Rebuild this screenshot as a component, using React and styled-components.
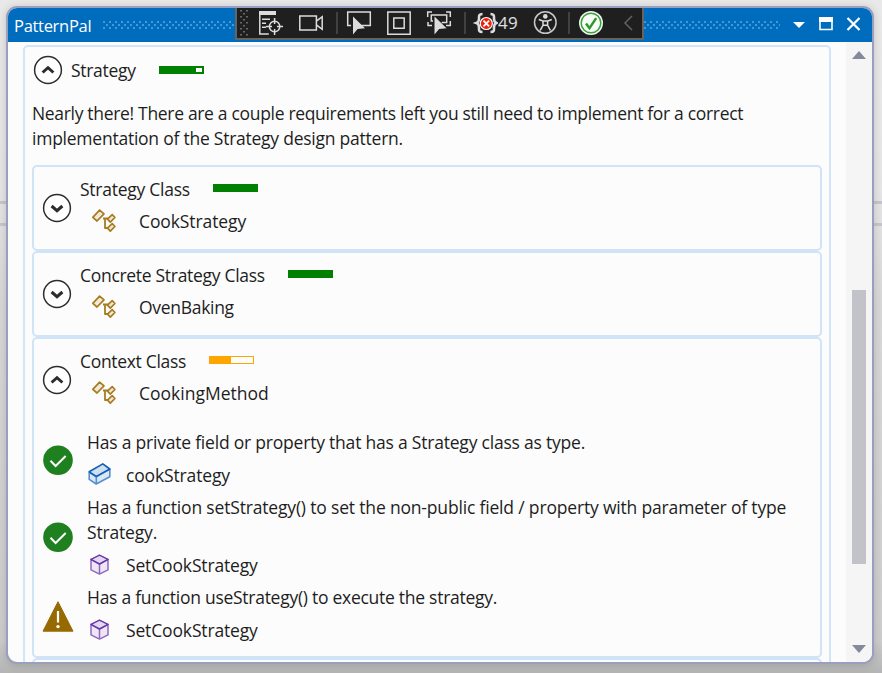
import React from "react";
import styled, { createGlobalStyle } from "styled-components";

const Global = createGlobalStyle`
  * { box-sizing: border-box; }
  body {
    margin: 0;
    overflow: hidden;
    font-family: "Open Sans", "Noto Sans", sans-serif;
    font-size: 17.5px;
    line-height: 25px;
    color: #1e1e1e;
  }
`;

const Desktop = styled.main`
  width: 882px;
  height: 673px;
  padding: 6px 8px 9px 6px;
  background:
    linear-gradient(#c6c6d2, #c6c6d2) 0 201px / 100% 3px no-repeat,
    linear-gradient(#c6c6d2, #c6c6d2) 0 223px / 100% 3px no-repeat,
    linear-gradient(#e9e9e9 0, #e6e6e6 190px, #d8d8d8 300px, #cdcdcd 640px, #b4b4b4 673px);
`;

const Window = styled.section`
  display: flex;
  flex-direction: column;
  width: 868px;
  height: 658px;
  border: 2px solid #9b9fbe;
  border-radius: 11px;
  overflow: hidden;
  background: #fcfcfc;
  box-shadow: 0 1px 8px rgba(0, 0, 0, 0.16);
`;

const TitleBar = styled.header`
  display: flex;
  flex: none;
  height: 34px;
  padding-left: 6px;
  background: #006cbe;
`;

const Title = styled.h1`
  flex: none;
  width: 89px;
  margin: 0;
  font-size: 16.5px;
  font-weight: 400;
  line-height: 35px;
  letter-spacing: ${(p) => p.$ls}px;
  color: #fff;
  white-space: nowrap;
`;

const Grip = styled.div`
  flex: none;
  width: ${(p) => p.$w}px;
  height: 8px;
  margin-top: 13px;
  background:
    conic-gradient(from 0deg at 2px 2px, transparent 75%, #4398d8 0) 0 0 / 6px 6px,
    conic-gradient(from 0deg at 2px 2px, transparent 75%, #4398d8 0) 3px 3px / 6px 6px;
`;

const DebugBar = styled.div`
  display: flex;
  flex: none;
  width: 409px;
  height: 34px;
  margin-top: -2px;
  border: 2px solid #666462;
  background: #1f1f1f;
`;

const WindowButtons = styled.svg`
  flex: none;
  width: 92px;
  height: 34px;
`;

const Body = styled.div`
  display: flex;
  flex: 1;
  min-height: 0;
`;

const Content = styled.div`
  flex: 1;
  min-width: 0;
  padding: 3px 15px 0 15px;
  overflow: hidden;
`;

const Pattern = styled.article`
  height: 700px;
  padding: 0 7px;
  border: 2px solid #d3e5f8;
  border-radius: 5px;
`;

const PatternHead = styled.div`
  display: flex;
  align-items: center;
  height: 45px;
  padding-left: 1px;
`;

const PatternName = styled.h2`
  flex: none;
  width: 96px;
  margin: 2px 0 0;
  padding-left: 8px;
  font-size: inherit;
  font-weight: 400;
  letter-spacing: -0.3px;
`;

const Description = styled.p`
  margin: 9px 0 14px;
`;

const Card = styled.section`
  height: ${(p) => p.$h}px;
  padding: 10px 0 0 8px;
  border: 2px solid #d0e3f7;
  border-radius: 5px;
`;

const CardHead = styled.div`
  display: flex;
  align-items: center;
  height: 62px;
`;

const CardTitles = styled.div`
  padding: 0 0 6px 8px;
`;

const Line = styled.div`
  display: flex;
  height: 25px;
  margin-bottom: ${(p) => p.$gap || 0}px;
`;

const Label = styled.span`
  flex: none;
  width: ${(p) => (p.$w ? `${p.$w}px` : "auto")};
  margin-left: ${(p) => p.$left || 0}px;
  letter-spacing: ${(p) => p.$ls || 0}px;
  white-space: nowrap;
`;

const Meter = styled.span`
  flex: none;
  width: 45px;
  height: 8px;
  margin-top: ${(p) => p.$top || 0}px;
  border: ${(p) => p.$edge || 2}px solid ${(p) => p.$color};
  background: linear-gradient(90deg, ${(p) => p.$color} ${(p) => p.$fill}%, #fcfcfc ${(p) => p.$fill}%) padding-box;
`;

const Requirements = styled.div`
  display: flex;
  flex-direction: column;
  gap: 7px;
  padding-top: 19px;
`;

const Requirement = styled.div`
  display: flex;
  align-items: center;
`;

const StatusSlot = styled.div`
  flex: none;
  width: 45px;
  height: 32px;
  margin-top: ${(p) => p.$top}px;
`;

const Member = styled.div`
  display: flex;
  margin-top: 8px;
  height: 25px;
`;

const MemberIcon = styled.svg`
  flex: none;
  width: ${(p) => p.$w}px;
  height: 26px;
  margin-top: -1px;
  margin-left: ${(p) => p.$left || 0}px;
`;

const ScrollBar = styled.div`
  flex: none;
  width: 26px;
  padding: 9px 0 9px 6px;
  background: #f5f5f5;
  display: flex;
  flex-direction: column;
  justify-content: space-between;
`;

const Thumb = styled.div`
  width: 14px;
  height: 274px;
  margin-top: 149px;
  background: #c2c3c9;
`;

const Arrow = styled.svg`
  display: block;
  width: 14px;
  height: 8px;
`;

function Chevron({ up }) {
  return (
    <svg width="30" height="30" viewBox="0 0 30 30" fill="none">
      <circle cx="15" cy="15" r="13.4" fill="#fff" stroke="#2d2d2d" strokeWidth="1.5" />
      <path d={up ? "M9.6 17.5 15 12.7l5.4 4.8" : "M9.6 13 15 17.7l5.4-4.7"} stroke="#2d2d2d" strokeWidth="3" />
    </svg>
  );
}

function ClassIcon() {
  return (
    <MemberIcon viewBox="0 0 26 26" $w={26} $left={11} fill="#f0e8d9" stroke="#a67c1f" strokeWidth="1.7" strokeLinejoin="round">
      <path d="M12 10.5h6M14 10.5v9.5h4" fill="none" strokeWidth="1.8" />
      <path d="M1.8 9.4 8.6 2.2 13 5.8 6 13Z" />
      <path d="m16.5 11.2 4.7-4.5 2.7 2.8-4.6 4.6Z" />
      <path d="m16.5 20.2 4.7-4.5 2.7 2.8-4.6 4.6Z" />
    </MemberIcon>
  );
}

function FieldIcon() {
  return (
    <MemberIcon viewBox="0 0 26 26" $w={39} preserveAspectRatio="xMinYMid meet" fill="#dce7f4" strokeWidth="1.6" strokeLinejoin="round">
      <path d="M2.2 10.4v7l7 4.6 13.6-7.2V7L9.3 14.7Z" stroke="#548fcf" />
      <path d="M9.3 14.7v7" stroke="#548fcf" />
      <path d="m2.2 9.8 13.6-7.9L22.8 7 9.3 14.4Z" fill="#cfdfef" stroke="#0f5fb6" />
    </MemberIcon>
  );
}

function MethodIcon() {
  return (
    <MemberIcon viewBox="0 0 26 26" $w={39} preserveAspectRatio="xMinYMid meet" fill="#ede6f4" strokeWidth="1.5" strokeLinejoin="round">
      <path d="M4 7.4v10.4l8.5 4.3 8.5-4.3V7.4L12.5 12Z M12.5 12v10" stroke="#9068bd" />
      <path d="m4 7.3 8.5-4.2L21 7.3 12.5 12Z" fill="#e3d8ee" stroke="#6936aa" />
    </MemberIcon>
  );
}

function Status({ ok }) {
  return (
    <StatusSlot $top={ok ? 3 : 6}>
      <svg width="32" height="32" viewBox="0 0 32 32">
        {ok ? (
          <>
            <circle cx="16" cy="15.3" r="14.8" fill="#1f801f" />
            <path d="m8.5 15.8 5.1 5.2L23.7 11" fill="none" stroke="#fff" strokeWidth="2" />
          </>
        ) : (
          <>
            <path d="M16 .7 31 30.2H1Z" fill="#966a00" stroke="#966a00" strokeLinejoin="round" />
            <path d="M16 10v11.5" stroke="#fff" strokeWidth="2.2" />
            <circle cx="16" cy="25.6" r="1.7" fill="#fff" />
          </>
        )}
      </svg>
    </StatusSlot>
  );
}

const ToolIcons = styled.svg`
  flex: none;
  width: ${(p) => p.$w}px;
  height: 30px;
`;

const Count = styled.span`
  flex: none;
  width: 26px;
  font-size: 17px;
  line-height: 30px;
  letter-spacing: 0.4px;
  color: #e0e0e0;
`;

const GRIP_ROWS = [0, 1, 2, 3, 4, 5, 6, 7, 8];

function DebugToolbar() {
  return (
    <DebugBar>
      <ToolIcons $w={261} viewBox="237 8 261 30" fill="none" stroke="#dcdcdc" strokeWidth="1.5">
        <g fill="#686868" stroke="none">
          {GRIP_ROWS.map((r) =>
            (r % 2 ? [243] : [240, 246]).map((x) => (
              <rect key={`${r}-${x}`} x={x} y={10 + r * 3} width="2" height="1.5" />
            ))
          )}
        </g>
        <path d="M259 11h17v4h-17z" fill="#dcdcdc" stroke="none" />
        <path d="M259.8 15v19h9M262 19.2h8M262 23.2h4M262 27.2h4" />
        <circle cx="274.6" cy="26.5" r="5.2" />
        <path d="M274.6 18v6M274.6 29v6M266 26.5h6M277 26.5h6" />
        <path d="M299.8 16h16.6v14h-16.6ZM316.4 21.2l5.8-4.5v12.6l-5.8-4.5" />
        <path d="M337 12v22M465 12v22" stroke="#414141" strokeWidth="2" />
        <path d="M351 25.5h-3.3V12h22.6v13.5h-9" />
        <path d="M353 16.5v18l4.6-5.6 7.4-.6Z" fill="#dcdcdc" stroke="none" />
        <path d="M387.8 12h22.4v22.2h-22.4ZM393.8 18h10.4v10.2h-10.4Z" />
        <path d="M432 12h-4.3v5M446 12h4.3v5M428 22v3.5h4M450.3 21v4.5H446M433 21h-1.7v-6h15.4v7.5h-5" />
        <path d="M434.5 16.5v18l4.6-5.6 7.4-.6Z" fill="#dcdcdc" stroke="none" />
        <path d="M482.5 14c-4 0-3.5 2-3.5 4.8 0 2.5-.8 3.6-2.5 4.2 1.7.6 2.5 1.9 2.5 4.4 0 2.8-.5 4.6 3.5 4.6M490.5 14c4 0 3.5 2 3.5 4.8 0 2.5.8 3.6 2.5 4.2-1.7.6-2.5 1.9-2.5 4.4 0 2.8.5 4.6-3.5 4.6" strokeWidth="2.6" />
        <circle cx="486.3" cy="23.5" r="6" fill="#f01e0a" stroke="#fff" strokeWidth="1.2" />
        <path d="m483.5 20.7 5.6 5.6m0-5.6-5.6 5.6" stroke="#fff" strokeWidth="1.8" />
      </ToolIcons>
      <Count>49</Count>
      <ToolIcons $w={118} viewBox="524 8 118 30" fill="none" stroke="#dcdcdc" strokeWidth="1.5">
        <circle cx="545.3" cy="22.5" r="10.8" stroke="#c8c8c8" />
        <circle cx="545.3" cy="16.4" r="2.3" fill="#dcdcdc" stroke="none" />
        <path d="m538.8 19.5 4.2 1.5v4.4l-2.8 5M551.8 19.5l-4.2 1.5v4.4l2.8 5M543 21h4.6M543 25.2h4.6" />
        <path d="M569 12v22" stroke="#414141" strokeWidth="2" />
        <circle cx="591" cy="23" r="12" fill="#f4f4f4" stroke="none" />
        <circle cx="591" cy="23" r="9.8" fill="#f8fff7" stroke="#37a537" />
        <path d="m586 23.6 3.5 4.5 6.7-10" stroke="#2d982d" strokeWidth="2.5" />
        <path d="m632 16-7 7 7 7" stroke="#626262" />
      </ToolIcons>
    </DebugBar>
  );
}

function ClassCard({ title, titleWidth, name, color = "#008000", fill = 100, open, height = 86, ls, nameLs, children }) {
  return (
    <Card $h={height}>
      <CardHead>
        <Chevron up={open} />
        <CardTitles>
          <Line $gap={7}>
            <Label $w={titleWidth} $ls={ls}>{title}</Label>
            <Meter $color={color} $fill={fill} $top={7} $edge={open ? 1 : 2} />
          </Line>
          <Line>
            <ClassIcon />
            <Label $left={22} $ls={nameLs}>{name}</Label>
          </Line>
        </CardTitles>
      </CardHead>
      {children}
    </Card>
  );
}

const requirements = [
  {
    ok: true,
    lines: ["Has a private field or property that has a Strategy class as type."],
    ls: -0.21,
    Icon: FieldIcon,
    member: "cookStrategy",
  },
  {
    ok: true,
    lines: ["Has a function setStrategy() to set the non-public field / property with parameter of type", "Strategy."],
    ls: -0.175,
    Icon: MethodIcon,
    member: "SetCookStrategy",
  },
  {
    ok: false,
    lines: ["Has a function useStrategy() to execute the strategy."],
    ls: -0.27,
    Icon: MethodIcon,
    member: "SetCookStrategy",
  },
];

export default function App() {
  return (
    <>
      <Global />
      <Desktop>
        <Window>
          <TitleBar>
            <Title $ls={-0.3}>PatternPal</Title>
            <Grip $w={132} />
            <DebugToolbar />
            <Grip $w={136} />
            <WindowButtons viewBox="780 8 92 34">
              <path d="M793 22h12l-6 6Z" fill="#fff" />
              <path d="M820 19.5h12v10h-12Z" fill="none" stroke="#fff" strokeWidth="1.6" />
              <path d="M819 17h14v5h-14Z" fill="#fff" />
              <path d="m847.5 18 12 12m0-12-12 12" stroke="#fff" strokeWidth="2.2" />
            </WindowButtons>
          </TitleBar>
          <Body>
            <Content>
              <Pattern>
                <PatternHead>
                  <Chevron up />
                  <PatternName>Strategy</PatternName>
                  <Meter $color="#008000" $fill={85} />
                </PatternHead>
                <Description>
                  <Label $ls={-0.32}>
                    Nearly there! There are a couple requirements left you still need to implement for a correct
                  </Label>
                  <br />
                  <Label $ls={-0.24}>implementation of the Strategy design pattern.</Label>
                </Description>
                <ClassCard title="Strategy Class" titleWidth={133} ls={-0.26} name="CookStrategy" nameLs={-0.1} />
                <ClassCard title="Concrete Strategy Class" titleWidth={208} ls={-0.3} name="OvenBaking" nameLs={-0.3} />
                <ClassCard
                  title="Context Class"
                  titleWidth={129}
                  ls={-0.32}
                  name="CookingMethod"
                  color="#ffa500"
                  fill={49}
                  open
                  height={321}
                >
                  <Requirements>
                    {requirements.map(({ ok, lines, ls, Icon, member }) => (
                      <Requirement key={lines[0]}>
                        <Status ok={ok} />
                        <div>
                          {lines.map((line) => (
                            <Line key={line}>
                              <Label $ls={ls}>{line}</Label>
                            </Line>
                          ))}
                          <Member>
                            <Icon />
                            <Label $ls={-0.15}>{member}</Label>
                          </Member>
                        </div>
                      </Requirement>
                    ))}
                  </Requirements>
                </ClassCard>
                <Card $h={86} />
              </Pattern>
            </Content>
            <ScrollBar>
              <Arrow viewBox="0 0 14 8">
                <path d="M0 8 7 0l7 8Z" fill="#868999" />
              </Arrow>
              <Thumb />
              <Arrow viewBox="0 0 14 8">
                <path d="M0 0h14L7 8Z" fill="#868999" />
              </Arrow>
            </ScrollBar>
          </Body>
        </Window>
      </Desktop>
    </>
  );
}
